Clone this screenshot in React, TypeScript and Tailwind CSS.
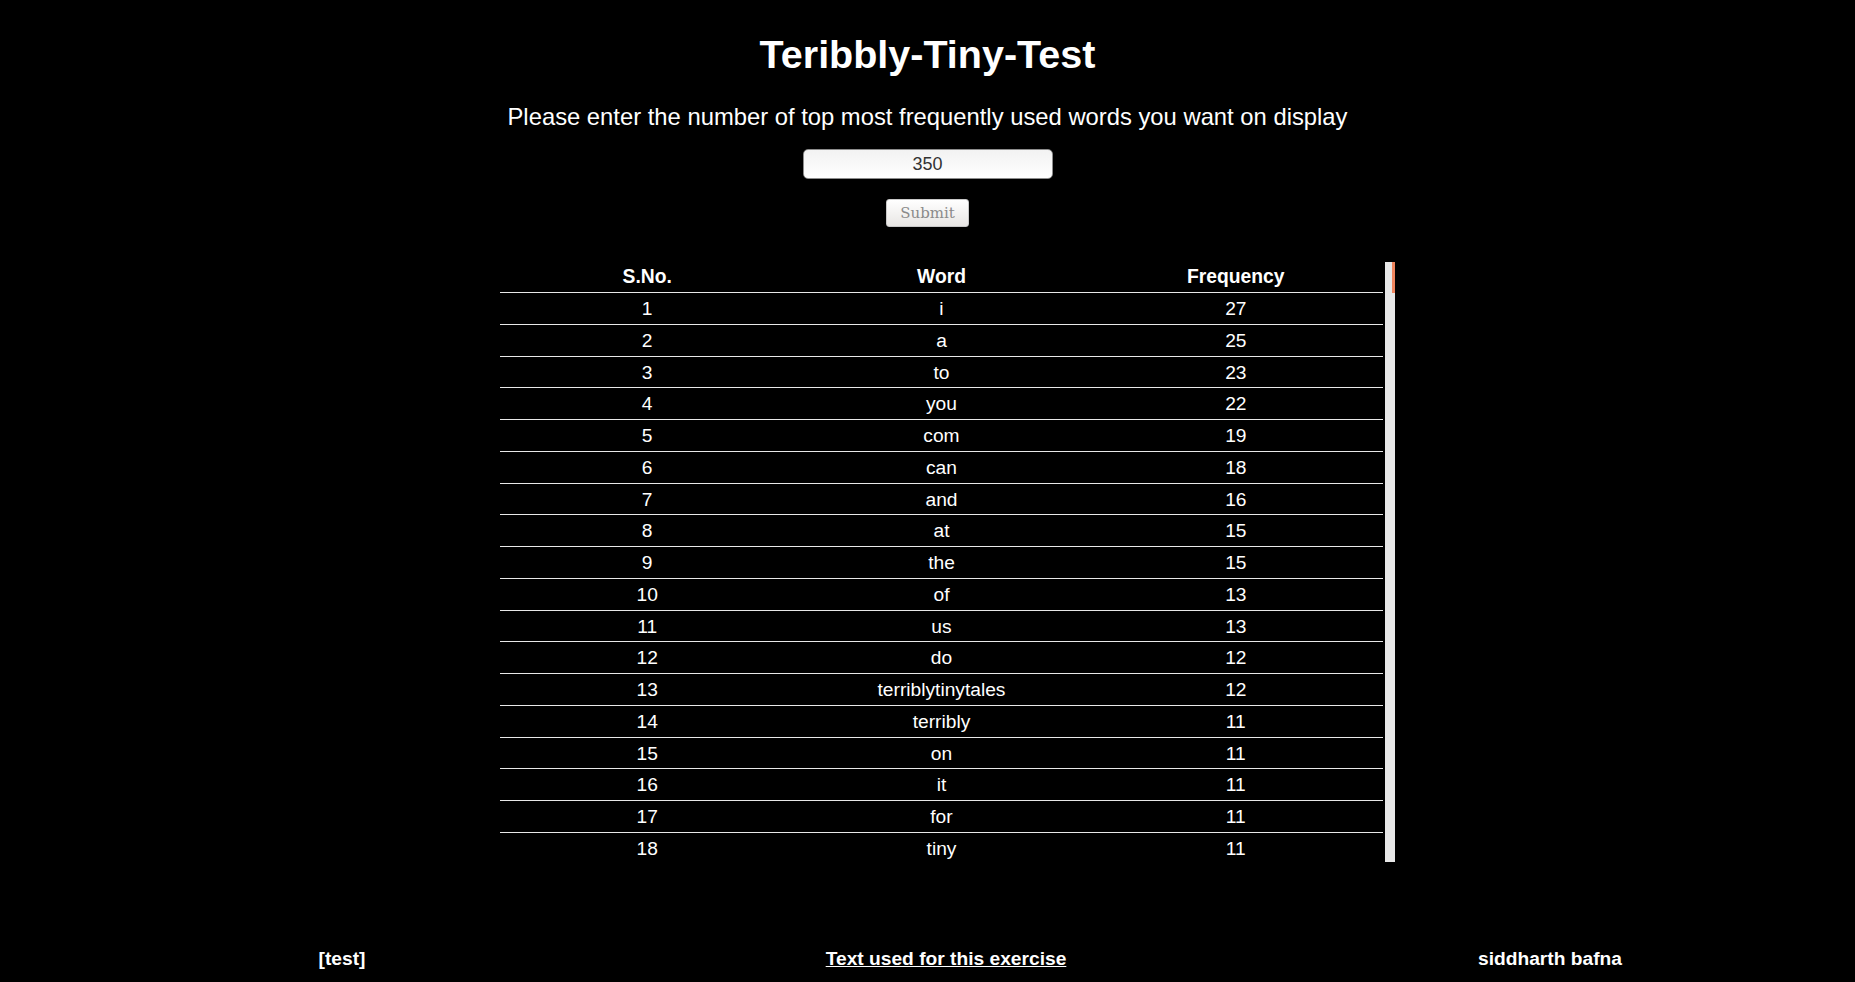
import React from "react";

const ROWS: [string, number][] = [
  ["i", 27],
  ["a", 25],
  ["to", 23],
  ["you", 22],
  ["com", 19],
  ["can", 18],
  ["and", 16],
  ["at", 15],
  ["the", 15],
  ["of", 13],
  ["us", 13],
  ["do", 12],
  ["terriblytinytales", 12],
  ["terribly", 11],
  ["on", 11],
  ["it", 11],
  ["for", 11],
  ["tiny", 11],
];

const App = () => {
  const [count, setCount] = React.useState("350");

  return (
    <div className="min-h-screen bg-black text-white font-['Liberation_Sans',Arial,sans-serif] flex flex-col items-center">
      <h1 className="mt-[32px] text-[39.5px] leading-[44px] font-bold">Teribbly-Tiny-Test</h1>
      <p className="mt-[27px] text-[23.8px] leading-[28px]">
        Please enter the number of top most frequently used words you want on display
      </p>
      <input
        value={count}
        onChange={(e) => setCount(e.target.value)}
        className="mt-[18px] w-[250px] h-[30px] rounded-[5px] border border-[#8c8c8c] bg-gradient-to-b from-[#f2f2f2] to-white text-center text-[18px] text-[#333] outline-none"
      />
      <button className="mt-[20px] w-[83px] h-[28px] rounded-[3px] border border-[#c8c8c8] bg-gradient-to-b from-white to-[#e8e6e4] text-[15px] text-[#8a8a8a] font-['DejaVu_Serif',serif]">
        Submit
      </button>

      <div className="mt-[35px] ml-[40px] flex gap-[2px] h-[600px]">
        <div className="w-[883px] h-full overflow-hidden">
          <div className="grid grid-cols-3 h-[31px] pt-[1px] border-b border-[#e8e8e8] items-center text-center text-[19.3px] font-bold">
            <div>S.No.</div>
            <div>Word</div>
            <div>Frequency</div>
          </div>
          {ROWS.map(([word, freq], index) => (
            <div
              key={word}
              className="grid grid-cols-3 h-[31.76px] pt-[2px] border-b border-[#e8e8e8] items-center text-center text-[19.2px]"
            >
              <div>{index + 1}</div>
              <div>{word}</div>
              <div>{freq}</div>
            </div>
          ))}
        </div>
        <div className="w-[10px] h-full bg-[#e8e8e8] flex justify-end">
          <div className="w-[3px] h-[31px] bg-[#f0855e]" />
        </div>
      </div>

      <div className="mt-[86px] w-full grid grid-cols-[604px_604px_604px] pl-[40px] text-[19.2px] leading-[22px] font-bold text-center">
        <div>[test]</div>
        <div>
          <a href="#" className="underline">Text used for this exercise</a>
        </div>
        <div>siddharth bafna</div>
      </div>
    </div>
  );
};

export default App;
